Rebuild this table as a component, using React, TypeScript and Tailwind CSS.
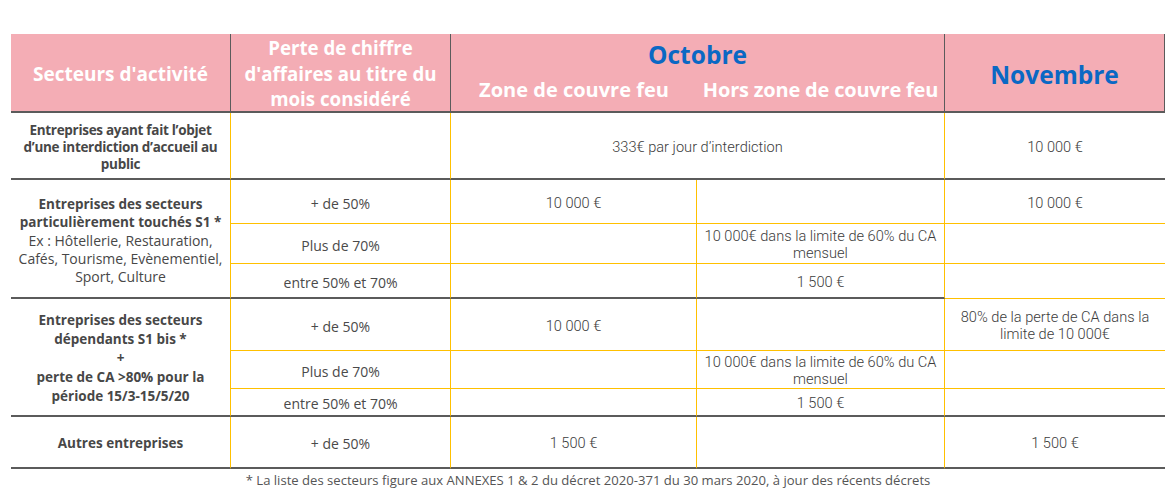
import React from "react";

const dark = "border-[#5b5b5b]";

// bas de cellule : trait gris foncé (fin de groupe) ou jaune (sous-ligne)
const Cell: React.FC<{
  children?: React.ReactNode;
  bottom?: "dark" | "yel";
  right?: boolean;
  className?: string;
}> = ({ children, bottom = "yel", right = true, className = "" }) => (
  <div
    className={`flex items-center justify-center text-center px-1 pt-[3px] ${
      bottom === "dark" ? "border-b-2 border-b-[#5b5b5b]" : "border-b border-b-[#ffc000]"
    } ${right ? "border-r border-r-[#ffc000]" : ""} ${className}`}
  >
    {children}
  </div>
);

const Val: React.FC<{ children: React.ReactNode }> = ({ children }) => (
  <span className="font-['Roboto',sans-serif] text-[14.6px] leading-[17px] text-[#3c3c3c] font-light">
    {children}
  </span>
);

const Pct: React.FC<{ children: React.ReactNode }> = ({ children }) => (
  <span className="font-['Open_Sans',sans-serif] text-[14px] text-[#4a4a4a]">{children}</span>
);

export default function App() {
  return (
    <div className="w-[1176px] h-[495px] bg-white pt-[34px] pl-[11px]">
      <div className="grid grid-cols-[220px_220px_246px_248px_220px] grid-rows-[79px_67px_44px_40px_35px_52px_38px_28px_52px] w-[1154px]">
        {/* en-tête */}
        <div className={`bg-[#f4adb5] border-b-2 border-r ${dark} flex items-center justify-center pt-[3px] text-white font-bold font-['Open_Sans',sans-serif] text-[19px]`}>
          Secteurs d'activité
        </div>
        <div className={`bg-[#f4adb5] border-b-2 border-r ${dark} flex items-center justify-center text-center text-white font-bold font-['Open_Sans',sans-serif] text-[18.7px] leading-[25.5px] pt-[2px]`}>
          Perte de chiffre
          <br />
          d'affaires au titre du
          <br />
          mois considéré
        </div>
        <div className={`col-span-2 bg-[#f4adb5] border-b-2 border-r ${dark} flex flex-col font-bold font-['Open_Sans',sans-serif]`}>
          <div className="text-center text-[#0a68c4] text-[24.5px] leading-[30px] pt-[6px]">Octobre</div>
          <div className="grid grid-cols-[246px_247px] text-white text-[20px] leading-[26px] pt-[7px]">
            <div className="text-center whitespace-nowrap">Zone de couvre feu</div>
            <div className="text-center whitespace-nowrap tracking-[-0.2px]">Hors zone de couvre feu</div>
          </div>
        </div>
        <div className={`bg-[#f4adb5] border-b-2 border-r ${dark} flex items-center justify-center text-[#0a68c4] font-bold font-['Open_Sans',sans-serif] text-[24.5px] pt-[5px]`}>
          Novembre
        </div>

        {/* fermeture au public */}
        <Cell bottom="dark" className="font-['Open_Sans',sans-serif] font-bold text-[13.5px] leading-[17px] text-[#474747] tracking-[-0.3px]">
          <span>
            Entreprises ayant fait l’objet
            <br />
            d’une interdiction d’accueil au
            <br />
            public
          </span>
        </Cell>
        <Cell bottom="dark" />
        <Cell bottom="dark" className="col-span-2">
          <Val>333€ par jour d’interdiction</Val>
        </Cell>
        <Cell bottom="dark" right={false}>
          <Val>10 000 €</Val>
        </Cell>

        {/* S1 */}
        <Cell bottom="dark" className="row-span-3 font-['Open_Sans',sans-serif] text-[14px] leading-[17.8px] text-[#474747]">
          <span>
            <span className="font-bold text-[13.5px]">
              Entreprises des secteurs
              <br />
              particulièrement touchés S1 *
            </span>
            <br />
            Ex : Hôtellerie, Restauration,
            <br />
            Cafés, Tourisme, Evènementiel,
            <br />
            Sport, Culture
          </span>
        </Cell>
        <Cell><Pct>+ de 50%</Pct></Cell>
        <Cell><Val>10 000 €</Val></Cell>
        <Cell />
        <Cell right={false}><Val>10 000 €</Val></Cell>

        <Cell><Pct>Plus de 70%</Pct></Cell>
        <Cell />
        <Cell><Val>10 000€ dans la limite de 60% du CA<br />mensuel</Val></Cell>
        <Cell right={false} />

        <Cell bottom="dark"><Pct>entre 50% et 70%</Pct></Cell>
        <Cell bottom="dark" />
        <Cell bottom="dark"><Val>1 500 €</Val></Cell>
        <Cell right={false} />

        {/* S1 bis */}
        <Cell bottom="dark" className="row-span-3 font-['Open_Sans',sans-serif] font-bold text-[13.5px] leading-[19px] text-[#474747]">
          <span>
            Entreprises des secteurs
            <br />
            dépendants S1 bis *
            <br />
            +
            <br />
            perte de CA &gt;80% pour la
            <br />
            période 15/3-15/5/20
          </span>
        </Cell>
        <Cell><Pct>+ de 50%</Pct></Cell>
        <Cell><Val>10 000 €</Val></Cell>
        <Cell />
        <Cell right={false}><Val>80% de la perte de CA dans la<br />limite de 10 000€</Val></Cell>

        <Cell><Pct>Plus de 70%</Pct></Cell>
        <Cell />
        <Cell><Val>10 000€ dans la limite de 60% du CA<br />mensuel</Val></Cell>
        <Cell right={false} />

        <Cell bottom="dark"><Pct>entre 50% et 70%</Pct></Cell>
        <Cell bottom="dark" />
        <Cell bottom="dark"><Val>1 500 €</Val></Cell>
        <Cell bottom="dark" right={false} />

        {/* autres */}
        <Cell bottom="dark" className="font-['Open_Sans',sans-serif] font-bold text-[13.5px] text-[#474747]">
          Autres entreprises
        </Cell>
        <Cell bottom="dark"><Pct>+ de 50%</Pct></Cell>
        <Cell bottom="dark"><Val>1 500 €</Val></Cell>
        <Cell bottom="dark" />
        <Cell bottom="dark" right={false}><Val>1 500 €</Val></Cell>
      </div>
      <p className="w-[1154px] text-center font-['Open_Sans',sans-serif] text-[13.1px] leading-[20px] pt-[1px] text-[#555]">
        * La liste des secteurs figure aux ANNEXES 1 &amp; 2 du décret 2020-371 du 30 mars 2020, à jour des récents décrets
      </p>
    </div>
  );
}
